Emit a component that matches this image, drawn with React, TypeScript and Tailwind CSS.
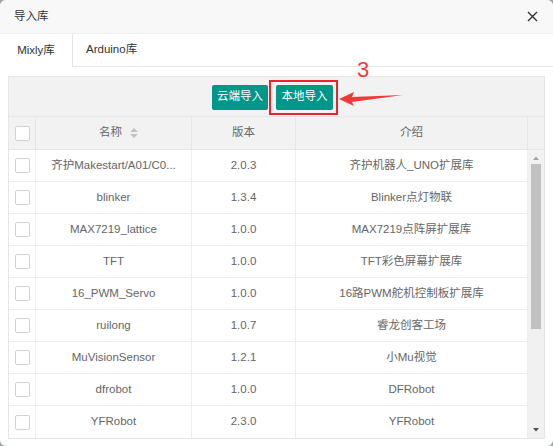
const rows = [
  { name: "齐护Makestart/A01/C0...", version: "2.0.3", intro: "齐护机器人_UNO扩展库" },
  { name: "blinker", version: "1.3.4", intro: "Blinker点灯物联" },
  { name: "MAX7219_lattice", version: "1.0.0", intro: "MAX7219点阵屏扩展库" },
  { name: "TFT", version: "1.0.0", intro: "TFT彩色屏幕扩展库" },
  { name: "16_PWM_Servo", version: "1.0.0", intro: "16路PWM舵机控制板扩展库" },
  { name: "ruilong", version: "1.0.7", intro: "睿龙创客工场" },
  { name: "MuVisionSensor", version: "1.2.1", intro: "小Mu视觉" },
  { name: "dfrobot", version: "1.0.0", intro: "DFRobot" },
  { name: "YFRobot", version: "2.3.0", intro: "YFRobot" },
];

function Checkbox() {
  return <div className="w-[15px] h-[15px] bg-white border border-[#d2d2d2] rounded-[2px]" />;
}

function SortIcon() {
  return (
    <svg width="8" height="10" viewBox="0 0 8 10" className="ml-[8px]">
      <path d="M0 4 L4 0 L8 4 Z" fill="#c2c2c2" />
      <path d="M0 6 L4 10 L8 6 Z" fill="#c2c2c2" />
    </svg>
  );
}

export default function App() {
  return (
    <div
      className="w-[553px] h-[446px] bg-[#9aa5a2] overflow-hidden"
      style={{ fontFamily: '"Liberation Sans", "Noto Sans CJK SC", sans-serif' }}
    >
      <div className="relative w-full h-full bg-white rounded-[6px] overflow-hidden flex flex-col">
        {/* Title bar */}
        <div className="h-[34px] shrink-0 bg-[#f8f8f8] border-b border-[#eeeeee] flex items-center justify-between pl-[14px] pr-[15px]">
          <span className="text-[11.5px] text-[#333]">导入库</span>
          <svg width="11" height="11" viewBox="0 0 11 11">
            <path d="M1 1 L10 10 M10 1 L1 10" stroke="#333" strokeWidth="1.4" />
          </svg>
        </div>

        {/* Tabs */}
        <div className="h-[33px] shrink-0 flex">
          <div className="w-[73px] h-full bg-white border-r border-[#e6e6e6] flex items-center justify-center text-[11.5px] text-[#333]">
            Mixly库
          </div>
          <div className="flex-1 h-full border-b border-[#e6e6e6] flex items-center pl-[13px] text-[11.5px] text-[#333]">
            Arduino库
          </div>
        </div>

        {/* Table */}
        <div className="mt-[9px] ml-[8px] w-[537px] border border-[#e6e6e6] text-[11.5px] text-[#666]">
          <div className="h-[40px] bg-[#f2f2f2] border-b border-[#e6e6e6] flex items-center justify-center gap-[8px] pr-[8px] pt-[1px]">
            <button className="h-[25px] w-[56px] bg-[#009688] text-white rounded-[2px] text-[11.5px]">云端导入</button>
            <div className="relative">
              <button className="h-[25px] w-[57px] bg-[#009688] text-white rounded-[2px] text-[11.5px]">本地导入</button>
              <div className="absolute left-[-7px] top-[-5px] w-[69px] h-[35px] border-2 border-[#e8252b]" />
            </div>
          </div>

          <div className="h-[33px] bg-[#f2f2f2] border-b border-[#e6e6e6] flex">
            <div className="w-[27px] border-r border-[#e6e6e6] flex items-center justify-center">
              <Checkbox />
            </div>
            <div className="w-[156px] border-r border-[#e6e6e6] flex items-center justify-center pl-[10px]">
              名称
              <SortIcon />
            </div>
            <div className="w-[104px] border-r border-[#e6e6e6] flex items-center justify-center">版本</div>
            <div className="w-[232px] border-r border-[#e6e6e6] flex items-center justify-center">介绍</div>
            <div className="flex-1" />
          </div>

          <div className="flex">
            <div className="flex-1">
              {rows.map((r, i) => (
                <div
                  key={r.name}
                  className={`h-[32px] flex ${i < rows.length - 1 ? "border-b border-[#eeeeee]" : ""}`}
                >
                  <div className="w-[27px] border-r border-[#eeeeee] flex items-center justify-center">
                    <Checkbox />
                  </div>
                  <div className="w-[156px] border-r border-[#eeeeee] flex items-center justify-center px-[8px] whitespace-nowrap overflow-hidden">
                    {r.name}
                  </div>
                  <div className="w-[104px] border-r border-[#eeeeee] flex items-center justify-center">{r.version}</div>
                  <div className="w-[232px] border-r border-[#eeeeee] flex items-center justify-center">{r.intro}</div>
                </div>
              ))}
            </div>
            {/* Scrollbar */}
            <div className="w-[16px] bg-[#f1f1f1] flex flex-col items-center">
              <svg width="8" height="12" viewBox="0 0 8 12" className="mt-[2px]">
                <path d="M1 8 L4 4.5 L7 8 Z" fill="#a3a3a3" />
              </svg>
              <div className="w-[10px] h-[165px] bg-[#c1c1c1]" />
              <div className="flex-1" />
              <svg width="8" height="12" viewBox="0 0 8 12" className="mb-[2px]">
                <path d="M1 4 L4 7.5 L7 4 Z" fill="#505050" />
              </svg>
            </div>
          </div>
        </div>

        {/* Annotation */}
        <div className="absolute left-[357px] top-[59px] text-[22px] leading-none text-[#f03b3b]">3</div>
        <svg className="absolute left-0 top-0" width="553" height="446" viewBox="0 0 553 446">
          <polygon points="339,99 354,92 352,97 403,95 352,102 354,106" fill="#ee3a3a" />
        </svg>
      </div>
    </div>
  );
}
